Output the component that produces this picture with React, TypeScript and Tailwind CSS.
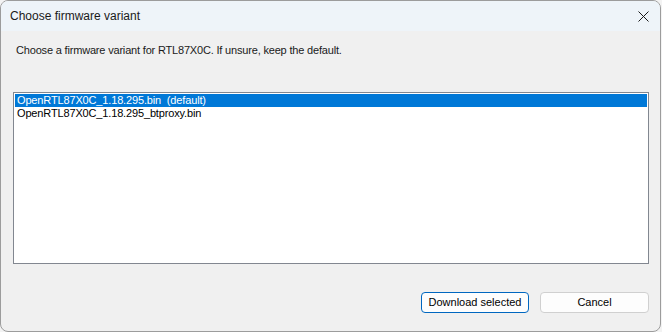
import { useState } from 'react';

const variants = ['OpenRTL87X0C_1.18.295.bin  (default)', 'OpenRTL87X0C_1.18.295_btproxy.bin'];

export default function App() {
  const [selected, setSelected] = useState(0);

  return (
    <div className="w-[662px] h-[332px] bg-[#f3f3f3] font-['Liberation_Sans',Arial,sans-serif]">
      <div className="w-[661px] h-[332px] flex flex-col border border-[#9c9c9c] rounded-lg overflow-hidden bg-[#f0f0f0]">
        {/* Title bar */}
        <div className="h-[30px] shrink-0 flex items-center justify-between bg-[#eef4f9] pl-[9px] pr-[6px]">
          <span className="text-[12px] text-[#1a1a1a]">Choose firmware variant</span>
          <button className="w-[22px] h-[22px] flex items-center justify-center text-[#1a1a1a]">
            <svg width="11" height="11" viewBox="0 0 11 11">
              <path d="M0.5 0.5 L10.5 10.5 M10.5 0.5 L0.5 10.5" stroke="currentColor" strokeWidth="1" />
            </svg>
          </button>
        </div>

        {/* Body */}
        <div className="flex-1 flex flex-col pl-[12px] pr-[11px] pt-[11px]">
          <p className="text-[11px] leading-[16px] pl-[3px] tracking-[-0.18px] text-[#1a1a1a]">
            Choose a firmware variant for RTL87X0C. If unsure, keep the default.
          </p>

          <div className="mt-[34px] w-[636px] h-[172px] border border-[#828790] bg-white p-[1px]">
            {variants.map((v, i) => (
              <div
                key={v}
                onClick={() => setSelected(i)}
                className={
                  i === selected
                    ? 'h-[13px] leading-[13px] pl-[2px] text-[11px] tracking-[-0.15px] whitespace-pre bg-[#0078d7] text-white'
                    : 'h-[13px] leading-[13px] pl-[2px] text-[11px] tracking-[-0.15px] whitespace-pre text-black'
                }
              >
                {v}
              </div>
            ))}
          </div>

          <div className="flex justify-end gap-[11px] mt-[28px] w-[636px]">
            <button className="w-[108px] h-[21px] rounded-[4px] border border-[#0067c0] bg-[#fdfdfd] text-[11px] text-black">
              Download selected
            </button>
            <button className="w-[109px] h-[21px] rounded-[4px] border border-[#d0d0d0] bg-[#fdfdfd] text-[11px] text-black">
              Cancel
            </button>
          </div>
        </div>
      </div>
    </div>
  );
}
